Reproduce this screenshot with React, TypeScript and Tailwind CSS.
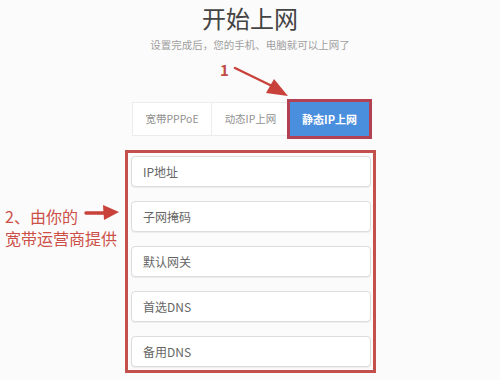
import React from 'react';

const fields = ['IP地址', '子网掩码', '默认网关', '首选DNS', '备用DNS'];
const tabs = ['宽带PPPoE', '动态IP上网', '静态IP上网'];

function Arrows() {
    return (
        <svg
            className="absolute left-0 top-0"
            width="500"
            height="380"
            viewBox="0 0 500 380"
        >
            <path
                d="M235 68 L272 86"
                stroke="#c8423b"
                strokeWidth="2.5"
                strokeLinecap="round"
            />
            <polygon points="288,96 266,93 274,79" fill="#c8423b" />
            <path
                d="M86 213 L106 213"
                stroke="#c8423b"
                strokeWidth="3.5"
                strokeLinecap="round"
            />
            <polygon points="119,212 103,205 104,220" fill="#c8423b" />
        </svg>
    );
}

export default function App() {
    return (
        <div
            className="relative w-[500px] h-[380px] overflow-hidden bg-[#fbfbfb]"
            style={{ fontFamily: '"Noto Sans CJK SC", "Noto Sans", sans-serif' }}
        >
            <div className="flex flex-col items-center">
                <h1 className="mt-[3px] text-[24px] leading-[30px] text-[#444] font-normal">
                    开始上网
                </h1>
                <p className="mt-[5px] text-[10.5px] leading-[14px] text-[#a0a0a0]">
                    设置完成后，您的手机、电脑就可以上网了
                </p>
            </div>

            <div className="mt-[50px] ml-[132px] flex w-[237px] h-[34px]">
                {tabs.map((tab, i) =>
                    i === 2 ? (
                        <div
                            key={tab}
                            className="w-[79px] flex items-center justify-center bg-[#4a8ede] text-white text-[11px] font-bold outline outline-[3px] outline-[#b24253]"
                        >
                            {tab}
                        </div>
                    ) : (
                        <div
                            key={tab}
                            className="w-[79px] flex items-center justify-center bg-white border border-[#ececec] text-[10.5px] text-[#909090] first:border-r-0"
                        >
                            {tab}
                        </div>
                    ),
                )}
            </div>

            <div className="mt-[14px] ml-[125px] w-[251px] border-[3px] border-[#c4504d] p-[3px] flex flex-col gap-[14px]">
                {fields.map((f) => (
                    <div
                        key={f}
                        className="w-[240px] h-[31px] flex items-center pl-[11px] bg-white border border-[#dcdcdc] rounded-[4px] shadow-[0_1px_1px_rgba(0,0,0,0.06)] text-[12px] text-[#666]"
                    >
                        {f}
                    </div>
                ))}
            </div>

            <Arrows />
            <span className="absolute left-[220px] top-[60px] text-[15px] leading-[20px] font-bold text-[#c04a45]">
                1
            </span>
            <div className="absolute left-[5px] top-[205px] text-[16px] leading-[22px] text-[#cc5048]">
                <div>2、由你的</div>
                <div>宽带运营商提供</div>
            </div>
        </div>
    );
}
